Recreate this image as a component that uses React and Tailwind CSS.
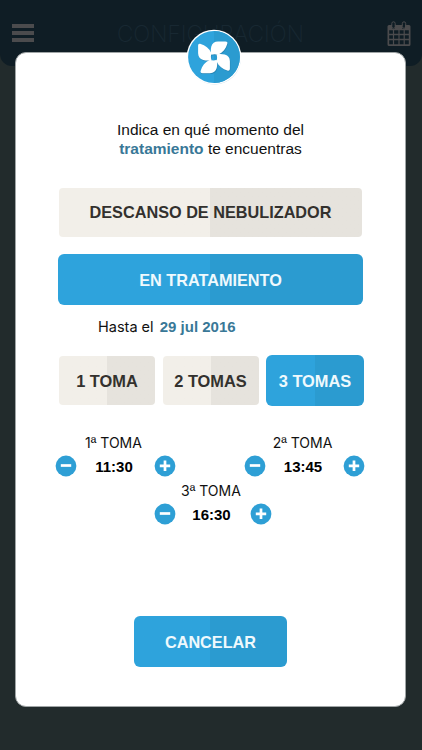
import { useState } from 'react'

const DOSES = ['1 TOMA', '2 TOMAS', '3 TOMAS']

const BLUE = 'bg-linear-to-r from-[#2ea3dc] from-50% to-[#2b9bd0] to-50% text-[#eff9fd] rounded-md'
const BEIGE = 'bg-linear-to-r from-[#f2efe9] from-50% to-[#e6e3dd] to-50% text-[#33312e] rounded-[4px]'

function CalendarIcon() {
  return (
    <svg viewBox="0 0 24 26" className="h-[26px] w-6 text-[#4b4b4d]">
      <path
        fill="currentColor"
        fillRule="evenodd"
        d="M2 4h3v2.5a1.5 1.5 0 0 0 3 0V4h7v2.5a1.5 1.5 0 0 0 3 0V4h4a1.5 1.5 0 0 1 1.500 1.500V23.500A1.500 1.500 0 0 1 22 25H2A1.500 1.500 0 0 1 .5 23.500V5.500A1.500 1.500 0 0 1 2 4z
        M2.200 9.200v3.600h3.700V9.200zM7.100 9.200v3.600h4.300V9.200zM12.600 9.200v3.600h4V9.200zM17.800 9.200v3.600h4V9.200z
        M2.200 14.200v3.600h3.700v-3.600zM7.100 14.200v3.600h4.300v-3.600zM12.600 14.200v3.600h4v-3.600zM17.800 14.200v3.600h4v-3.600z
        M2.200 19.200v4.100h3.700v-4.100zM7.100 19.200v4.100h4.300v-4.100zM12.600 19.200v4.100h4v-4.100zM17.800 19.200v4.100h4v-4.100z"
      />
      <g fill="none" stroke="currentColor">
        <rect x="4.800" y=".8" width="3.400" height="6.500" rx="1.700" />
        <rect x="15.300" y=".8" width="3.400" height="6.500" rx="1.700" />
      </g>
    </svg>
  )
}

const BLADE = 'M25.300 25.800C24.500 23.500 24.700 20 25.300 17.500C26.400 14 28.500 12.500 32 12.400H39.500C41.300 12.400 41.900 13.600 41.200 15C40 19.500 37 23.500 32 25.800C29.800 25 27.300 25 25.300 25.800z'

function FanBadge() {
  return (
    <svg viewBox="0 0 56 56" className="h-14 w-14">
      <circle cx="28.500" cy="29" r="26.500" fill="#c9dde8" />
      <circle cx="28" cy="28" r="27.300" fill="#fff" />
      <circle cx="28" cy="28" r="25.900" fill="#2ea3dc" />
      <path d="M28 2.100a25.900 25.900 0 0 1 0 51.800z" fill="#2b9bd0" />
      {['#2685b5', '#fff'].map((fill, i) => (
        <g key={fill} fill={fill} transform={i ? undefined : 'translate(.5 .8)'}>
          <path d={BLADE} />
          <path d={BLADE} transform="rotate(90 28 28.300)" />
          <path d={BLADE} transform="rotate(180 28 28.300)" />
          <path d={BLADE} transform="rotate(270 28 28.300)" />
        </g>
      ))}
    </svg>
  )
}

function StepButton({ plus, onClick }) {
  return (
    <button onClick={onClick} aria-label={plus ? 'Más' : 'Menos'}>
      <svg viewBox="0 0 22 22" className="block h-[22px] w-[22px]">
        <circle cx="11" cy="11" r="10.400" fill="#2e9fd5" />
        <path d={plus ? 'M5.800 10.800h10.400M11 5.600v10.400' : 'M5.800 10.500h10.400'} stroke="#fff" strokeWidth="2.700" />
      </svg>
    </button>
  )
}

function DoseTime({ label, time, className }) {
  const [minutes, setMinutes] = useState(time)
  const hh = String(Math.floor(minutes / 60)).padStart(2, '0')
  const mm = String(minutes % 60).padStart(2, '0')
  const shift = (d) => setMinutes((minutes + d + 1440) % 1440)

  return (
    <div className={className}>
      <p className="pr-1 text-center font-[Inter] text-[14px] leading-5 text-[#111]">
        {label[0]}<span className="font-['Liberation_Sans'] text-[15px] leading-none">{label[1]}</span>{label.slice(2)}
      </p>
      <div className="mt-[2px] flex items-center justify-between">
        <StepButton onClick={() => shift(-15)} />
        <span className="pt-[2px] pr-[3px] text-[15px] leading-5 font-bold text-black">{hh}:{mm}</span>
        <StepButton plus onClick={() => shift(15)} />
      </div>
    </div>
  )
}

export default function App() {
  const [treating, setTreating] = useState(true)
  const [dose, setDose] = useState(2)

  return (
    <div className="relative h-[750px] w-[422px] overflow-hidden bg-[#222b2c] font-['Liberation_Sans',Arial,sans-serif]">
      <header className="flex h-[66px] items-start justify-between rounded-b-xl bg-[#0f1d25] pr-[11px] pl-3">
        <div className="mt-6 flex w-[22px] flex-col gap-[3px]">
          <span className="h-1 bg-[#4b4b4d]" />
          <span className="h-1 bg-[#4b4b4d]" />
          <span className="h-1 bg-[#4b4b4d]" />
        </div>
        <h1 className="mt-[18px] font-[Inter] text-[22.500px] leading-8 font-extralight text-[#182832]">CONFIGURACIÓN</h1>
        <div className="mt-[21px]"><CalendarIcon /></div>
      </header>

      <main className="absolute top-[52px] left-[15px] flex h-[655px] w-[391px] flex-col rounded-[11px] border border-[#a0a5a6] bg-white">
        <div className="absolute -top-[24px] left-[170px]"><FanBadge /></div>

        <p className="mt-[67px] text-center text-[15.500px] leading-[19px] text-[#111]">
          Indica en qué momento del<br />
          <b className="text-[#397897]">tratamiento</b> te encuentras
        </p>

        <button onClick={() => setTreating(false)} className={`mt-[30px] ml-[43px] h-[49px] w-[303px] text-[16.250px] font-bold ${BEIGE}`}>
          DESCANSO DE NEBULIZADOR
        </button>
        <button onClick={() => setTreating(true)} className={`mt-[17px] ml-[42px] h-[51px] w-[305px] pt-[1px] text-[16.250px] font-bold ${BLUE}`}>
          EN TRATAMIENTO
        </button>

        {treating && (
          <>
            <p className="mt-[12px] ml-[82px] text-[15px] leading-5 text-[#111]">
              <span className="font-[Inter] text-[14.500px]">Hasta el</span>{' '}
              <b className="ml-[2px] text-[#397897]">29 jul 2016</b>
            </p>

            <div className="mt-[18px] ml-[43px] flex h-[51px] w-[305px] items-center justify-between">
              {DOSES.map((d, i) => (
                <button
                  key={d}
                  onClick={() => setDose(i)}
                  className={`pt-[2px] text-[16.400px] font-bold ${i === dose ? `h-[51px] w-[98px] ${BLUE}` : `h-[49px] w-[96px] ${BEIGE}`}`}
                >
                  {d}
                </button>
              ))}
            </div>

            <div className="mt-[27px] ml-[39px] flex w-[310px] flex-wrap justify-between gap-y-1">
              <DoseTime label="1ª TOMA" time={690} className="w-[121px]" />
              <DoseTime label="2ª TOMA" time={825} className="w-[121px]" />
              <DoseTime label="3ª TOMA" time={990} className="ml-[99px] w-[118px]" />
            </div>
          </>
        )}

        <button className={`mt-auto mb-[39px] ml-[118px] h-[51px] w-[153px] pt-[1px] text-[16.250px] font-bold ${BLUE}`}>
          CANCELAR
        </button>
      </main>
    </div>
  )
}
